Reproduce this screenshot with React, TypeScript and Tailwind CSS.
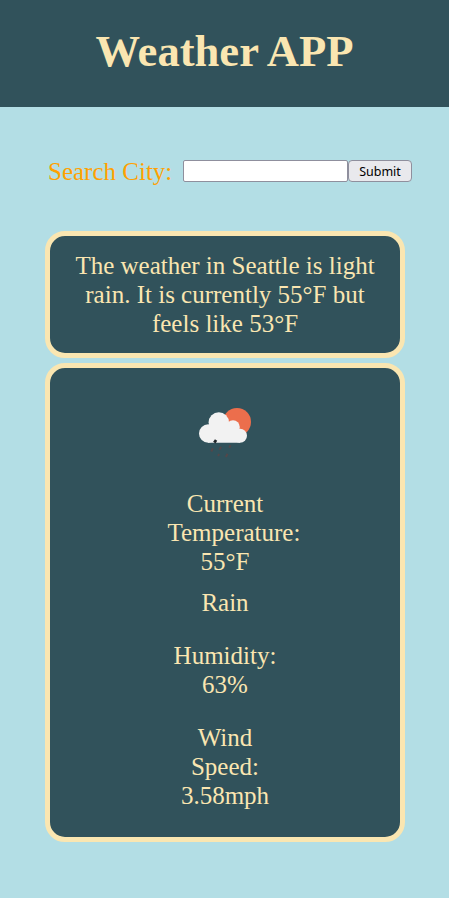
export default function App() {
  return (
    <div className="flex min-h-[898px] w-full flex-col bg-[#b3dee5] font-['Liberation_Serif',serif] text-[25px] leading-[29px] text-[#fae6b1]">
      <header className="flex h-[107px] items-center justify-center bg-[#31525b] pb-[6px]">
        <h1 className="text-[44.6px] leading-[52px] font-bold">Weather APP</h1>
      </header>
      <form className="mt-[50px] ml-12 flex h-[29px] items-start" onSubmit={(e) => e.preventDefault()}>
        <label htmlFor="city" className="w-[135px] whitespace-nowrap text-[#ffa101]">Search City:</label>
        <input id="city" className="mt-[3px] h-[22px] w-[165px] rounded-[2px] border border-[#8f8f9d] bg-white px-1 text-[13px]" />
        <button className="mt-[3px] h-[22px] w-16 rounded-[4px] border border-[#8f8f9d] bg-[#e9e9ed] pt-px font-['Noto_Sans',sans-serif] text-[12.5px] leading-[19px] text-black">Submit</button>
      </form>
      <main className="mt-[45px] ml-[45px] flex w-[360px] flex-col gap-[5px] text-center">
        <section className="h-[127px] rounded-[20px] border-[5px] border-[#fae6b1] bg-[#31525b] px-5 pt-[15px]">
          The weather in Seattle is light rain. It is currently 55°F but feels like 53°F
        </section>
        <section className="flex h-[479px] flex-col items-center rounded-[20px] border-[5px] border-[#fae6b1] bg-[#31525b] pt-[21px]">
          <svg width="100" height="100" viewBox="0 0 100 100" aria-label="Rain">
            <circle cx="62" cy="33" r="14" fill="#ec6e4c" />
            <g fill="#f2f2f2">
              <circle cx="33.2" cy="44.5" r="9.2" />
              <circle cx="43.8" cy="33.5" r="10.2" />
              <circle cx="58" cy="38" r="6.8" />
              <circle cx="65" cy="46.7" r="7" />
              <path d="M33 36h25l7 5v12.7H33Z" />
            </g>
            <path d="m39.3 53.6 1.8-2.6" stroke="#202529" strokeWidth="2.8" />
            <path d="m36.3 62.5 1.6-3.2m6.5 1.6 1.6-3.2m8.3 1 1.2-2.4M43 67l1.2-2m6.7 3 1.6-3.2" stroke="#53474a" strokeWidth="2" />
          </svg>
          <p className="w-[115px]">Current Temperature: 55°F</p>
          <p className="mt-3">Rain</p>
          <p className="mt-6 w-[110px]">Humidity: 63%</p>
          <p className="mt-6 w-[100px]">Wind Speed: 3.58mph</p>
        </section>
      </main>
    </div>
  );
}
